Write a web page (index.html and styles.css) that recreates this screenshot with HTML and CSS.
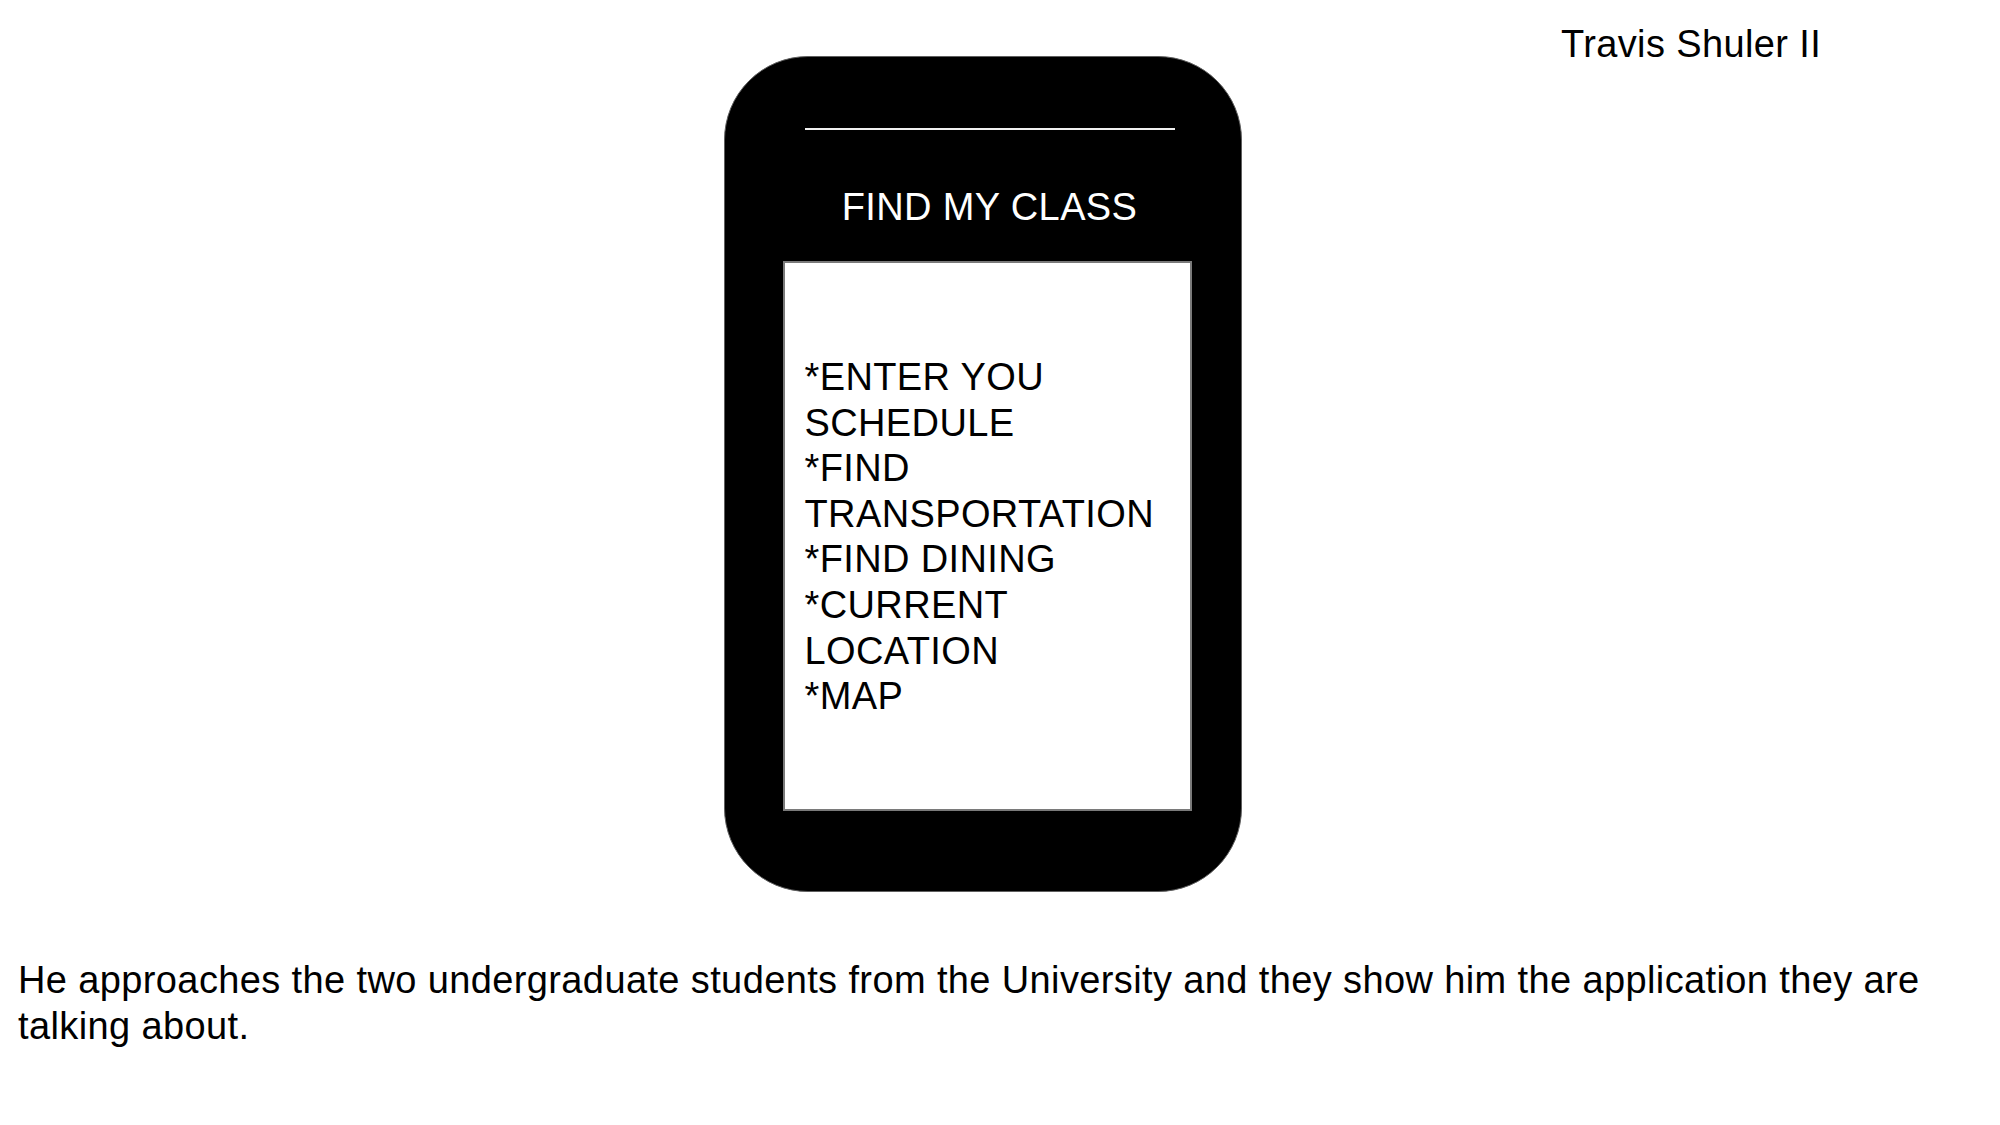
FILE: index.html
```html
<!DOCTYPE html>
<html lang="en">
<head>
  <meta charset="UTF-8">
  <title>Find My Class - Storyboard</title>
  <link rel="stylesheet" href="styles.css">
</head>
<body>
  <div class="slide">
    <div class="top">
      <div class="phone">
        <div class="speaker"></div>
        <h1 class="app-title">FIND MY CLASS</h1>
        <div class="screen">
          <p>*ENTER YOU SCHEDULE</p>
          <p>*FIND TRANSPORTATION</p>
          <p>*FIND DINING</p>
          <p>*CURRENT LOCATION</p>
          <p>*MAP</p>
        </div>
      </div>
      <div class="author">Travis Shuler II</div>
    </div>

    <p class="caption">He approaches the two undergraduate students from the University and they show him the application they are talking about.</p>
  </div>
</body>
</html>
```

FILE: styles.css
```css
body {
  margin: 0;
  background-color: #ffffff;
  color: #000000;
  font-family: 'Liberation Sans', Arial, sans-serif;
  letter-spacing: 0.38px;
}
.slide {
  width: 2000px;
  height: 1125px;
  overflow: hidden;
}
.top {
  display: grid;
  grid-template-columns: 724px 518px 1fr;
}
.phone {
  grid-column: 2;
  margin-top: 56px;
  width: 518px;
  height: 836px;
  box-sizing: border-box;
  background-color: #000000;
  border: 1.5px solid #5f5f5f;
  border-radius: 84px;
}
.speaker {
  margin: 70.5px 0 0 79.5px;
  width: 370px;
  height: 2px;
  background-color: #f0f0f0;
}
.app-title {
  margin: 55.5px 0 0 79.5px;
  width: 370px;
  color: #ffffff;
  font-size: 38px;
  font-weight: normal;
  line-height: 45.6px;
  text-align: center;
}
.screen {
  margin: 30px 0 0 57.5px;
  width: 409px;
  height: 550px;
  box-sizing: border-box;
  background-color: #ffffff;
  border: 2px solid #7a7a7a;
  padding: 92.5px 20px 0 20px;
}
.screen p {
  margin: 0;
  font-size: 38px;
  line-height: 45.6px;
}
.author {
  grid-column: 3;
  padding: 21.5px 0 0 319px;
  font-size: 38px;
  line-height: 45.6px;
  white-space: nowrap;
}
.caption {
  margin: 66px 40px 0 18px;
  font-size: 38px;
  line-height: 45.6px;
}
```
